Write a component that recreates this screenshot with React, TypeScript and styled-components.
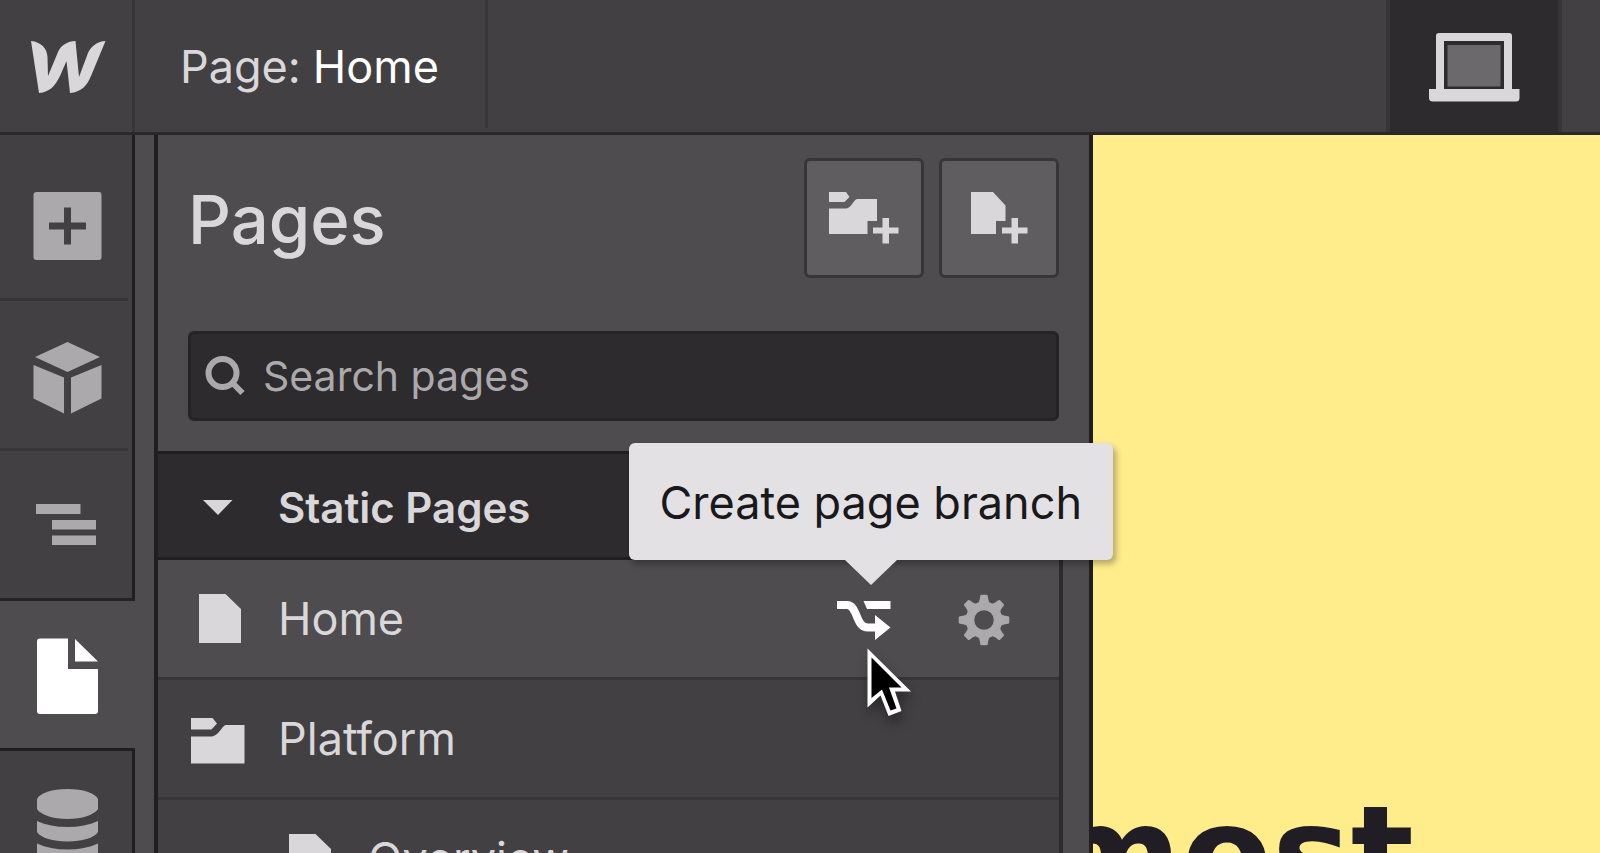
import React from "react";
import styled, { createGlobalStyle, css } from "styled-components";

const color = {
  bar: "#424042",
  panel: "#4e4c4e",
  raised: "#5f5d5f",
  sunken: "#2d2b2e",
  line: "#373538",
  edge: "#252326",
  dark: "#201e21",
  text: "#d9d7da",
  muted: "#aba9ab",
  white: "#ffffff",
  tip: "#e3e1e4",
  canvas: "#ffed8c",
  ink: "#201e24",
};

const GlobalStyle = createGlobalStyle`
  *, *::before, *::after { box-sizing: border-box; }
  body {
    margin: 0;
    background: ${color.panel};
    color: ${color.text};
    font-family: Inter, "Liberation Sans", sans-serif;
    font-optical-sizing: none;
    font-size: 45px;
    line-height: 60px;
  }
  button, input { font: inherit; color: inherit; margin: 0; padding: 0; border: 0; background: none; }
  button { display: flex; cursor: pointer; }
  svg { display: block; flex: none; }
`;

const Shell = styled.div`
  display: flex;
  flex-direction: column;
  height: 100vh;
  overflow: hidden;
`;

const TopBar = styled.header`
  display: flex;
  flex: none;
  height: 135px;
  background: ${color.bar};
  border-bottom: 3px solid #2a282b;
`;

const LogoLink = styled.a`
  display: flex;
  align-items: center;
  justify-content: center;
  width: 135px;
  padding: 2px 0 0 4px;
  border-right: 3px solid ${color.line};
`;

const PageButton = styled.button`
  align-items: center;
  gap: 12px;
  height: 128px;
  padding: 6px 46px 0 45px;
  border-right: 3px solid ${color.line};
  white-space: nowrap;
`;

const PageName = styled.span`
  color: ${color.white};
`;

const DeviceButton = styled.button`
  align-items: center;
  justify-content: center;
  width: 176px;
  margin: 0 38px 0 auto;
  padding-top: 2px;
  background: ${color.sunken};
  border: solid ${color.line};
  border-width: 0 4px;
`;

const Workspace = styled.div`
  display: flex;
  flex: 1;
  min-height: 0;
`;

const Sidebar = styled.nav`
  flex: none;
  width: 154px;
`;

const ToolGroup = styled.div<{ $after?: boolean }>`
  width: 135px;
  background: ${color.bar};
  border-right: 3px solid ${color.dark};
  ${(p) =>
    p.$after
      ? css`
          border-top: 3px solid ${color.dark};
        `
      : css`
          padding-top: 16px;
          border-bottom: 3px solid ${color.edge};
        `}
`;

const Rule = styled.div`
  height: 3px;
  margin-right: 4px;
  background: ${color.line};
`;

const ToolButton = styled.button<{ $active?: boolean }>`
  align-items: center;
  justify-content: center;
  width: 132px;
  height: 147px;
  padding-top: 3px;
  color: ${(p) => (p.$active ? color.white : color.muted)};
`;

const Panel = styled.section`
  display: flex;
  flex-direction: column;
  flex: none;
  width: 939px;
  z-index: 1;
  background: ${color.panel};
  border: solid ${color.dark};
  border-width: 0 4px;
`;

const PanelHeader = styled.div`
  display: flex;
  align-items: center;
  gap: 15px;
  padding: 23px 30px 0;
`;

const Title = styled.h1`
  flex: 1;
  margin: 0;
  padding-top: 3px;
  font-size: 67px;
  font-weight: 500;
  line-height: 84px;
`;

const CreateButton = styled.button`
  background: ${color.raised};
  border: 3px solid ${color.line};
  border-radius: 6px;
`;

const SearchBox = styled.label`
  display: flex;
  align-items: center;
  gap: 16px;
  height: 90px;
  flex: none;
  margin: 53px 30px 30px;
  padding: 0 14px;
  background: ${color.sunken};
  border: 3px solid ${color.edge};
  border-radius: 6px;
  color: ${color.muted};
`;

const SearchInput = styled.input`
  flex: 1;
  min-width: 0;
  height: 60px;
  outline: 0;
  font-size: 41px;
  &::placeholder { color: ${color.muted}; opacity: 1; }
`;

const PageList = styled.div`
  flex: 1;
  margin-right: 26px;
  background: ${color.bar};
  border-right: 4px solid ${color.sunken};
`;

const SectionButton = styled.button`
  align-items: center;
  gap: 30px;
  width: 100%;
  height: 109px;
  padding: 5px 30px 0;
  background: ${color.sunken};
  border: solid ${color.dark};
  border-width: 3px 0;
  font-size: 42px;
  font-weight: 600;
`;

const Rows = styled.ul`
  margin: 0;
  padding: 0;
  list-style: none;
`;

const Row = styled.li<{ $current?: boolean; $nested?: boolean }>`
  display: flex;
  align-items: center;
  gap: 60px;
  height: 120px;
  padding: 0 45px 0 ${(p) => (p.$nested ? 120 : 30)}px;
  background: ${(p) => (p.$current ? color.panel : color.bar)};
  border-bottom: 3px solid ${color.line};
`;

const RowLink = styled.a`
  display: flex;
  flex: 1;
  align-items: center;
  gap: 30px;
  color: ${color.text};
  text-decoration: none;
`;

const RowAction = styled.button<{ $hovered?: boolean }>`
  position: relative;
  color: ${(p) => (p.$hovered ? color.white : color.muted)};
`;

const Tooltip = styled.span`
  position: absolute;
  right: -219px;
  bottom: 89px;
  padding: 30px 31px 27px 30px;
  background: ${color.tip};
  border-radius: 6px;
  box-shadow: 3px 4px 6px rgba(0, 0, 0, 0.3);
  color: #19181b;
  white-space: nowrap;
  &::after {
    content: "";
    position: absolute;
    top: 100%;
    right: 216px;
    border: solid transparent;
    border-width: 25px 26px 0;
    border-top-color: ${color.tip};
  }
`;

const Pointer = styled.svg`
  position: absolute;
  top: 59px;
  left: 33px;
  overflow: visible;
  filter: drop-shadow(2px 8px 6px rgba(0, 0, 0, 0.35));
`;

const Canvas = styled.main`
  flex: 1;
  min-width: 0;
  overflow: hidden;
  padding-top: 653px;
  background: ${color.canvas};
`;

const CanvasHeading = styled.h2`
  margin: 0 0 0 -49px;
  color: ${color.ink};
  font-family: "DejaVu Sans", sans-serif;
  font-size: 132px;
  font-weight: 700;
  line-height: 132px;
`;

const Logo = () => (
  <svg width="76" height="54" viewBox="0 0 76 54" fill={color.text} aria-hidden="true">
    <path d="M1 1C11 2 17 8 17.500 17L18 36L28 12C31 5 38 1 45.500 1L49 37L58 13C61 6 68 1 75.500 1L61 36C57 46 51 52 40 53L36.500 21L30 36C25 46 20 52 9 53Z" />
  </svg>
);

const Laptop = () => (
  <svg width="92" height="70" viewBox="0 0 92 70" aria-hidden="true">
    <path
      fill={color.text}
      fillRule="evenodd"
      d="M8 57V4Q8 1 11 1H81Q84 1 84 4V57H91.500V66Q91.500 69.500 88 69.500H5Q1 69.500 1 66V57ZM16 9V57H76V9Z"
    />
    <path fill="#6b696b" d="M19.500 13H72.500V54.500H19.500Z" />
  </svg>
);

const ToolIcon = ({ children }: { children: React.ReactNode }) => (
  <svg width="76" height="80" viewBox="0 0 76 80" fill="currentColor" aria-hidden="true">
    {children}
  </svg>
);

const PageIcon = () => (
  <svg width="60" height="60" viewBox="0 0 60 60" fill={color.text} aria-hidden="true">
    <path d="M11 5H37.500L53 20V54H11Z" />
  </svg>
);

const FolderIcon = () => (
  <svg width="60" height="60" viewBox="0 0 60 60" fill={color.text} aria-hidden="true">
    <path d="M3 9H24.500L29 14.500L23.500 20.500H3Z" />
    <path d="M3 27.500H23.500C28 27 31 23 33 20.500Q36 16 38 16H56.500V54.500H3Z" />
  </svg>
);

const Gear = () => (
  <svg width="60" height="60" viewBox="0 0 60 60" aria-hidden="true">
    <circle cx="30" cy="31" r="14" fill="none" stroke="currentColor" strokeWidth="8.500" />
    {[0, 45, 90, 135, 180, 225, 270, 315].map((a) => (
      <path
        key={a}
        fill="currentColor"
        transform={`rotate(${a} 30 31)`}
        d="M23 15Q25.500 14 26.200 7Q26.400 5.700 27.500 5.700H32.500Q33.600 5.700 33.800 7Q34.500 14 37 15Z"
      />
    ))}
  </svg>
);

const Branch = () => (
  <svg width="60" height="60" viewBox="0 0 60 60" aria-hidden="true">
    <path d="M3 16H13C24 16 21 38.500 34 38.500H42" fill="none" stroke="currentColor" strokeWidth="8" />
    <path d="M41 26L56.500 38.500L41 51ZM29.500 12H56.500V20H33Z" fill="currentColor" />
  </svg>
);

export default function App() {
  return (
    <Shell>
      <GlobalStyle />
      <TopBar>
        <LogoLink href="#" aria-label="Dashboard">
          <Logo />
        </LogoLink>
        <PageButton type="button">
          <span>Page:</span>
          <PageName>Home</PageName>
        </PageButton>
        <DeviceButton type="button" aria-label="Desktop">
          <Laptop />
        </DeviceButton>
      </TopBar>
      <Workspace>
        <Sidebar>
          <ToolGroup>
            <ToolButton type="button" aria-label="Add elements">
              <ToolIcon>
                <path
                  fillRule="evenodd"
                  d="M8.500 6H71Q73.500 6 73.500 9V71Q73.500 74 71 74H8.500Q5.500 74 5.500 71V9Q5.500 6 8.500 6ZM36 21.500V36.500H21V43.500H36V58.500H43V43.500H58V36.500H43V21.500Z"
                />
              </ToolIcon>
            </ToolButton>
            <Rule />
            <ToolButton type="button" aria-label="Components">
              <ToolIcon>
                <path d="M39.500 6L72 21L39.500 36L7 21ZM5.500 29L36 41.500V77.500L5.500 62.500ZM43 41.500L73.500 29V62.500L43 77.500Z" />
              </ToolIcon>
            </ToolButton>
            <Rule />
            <ToolButton type="button" aria-label="Navigator">
              <ToolIcon>
                <path d="M8 18H52.500V28H8ZM24 34H68V43.500H24ZM24 49.500H68V59H24Z" />
              </ToolIcon>
            </ToolButton>
          </ToolGroup>
          <ToolButton type="button" aria-label="Pages" $active>
            <ToolIcon>
              <path d="M12 2.500H40V33H70V75Q70 78 67 78H12Q9 78 9 75V5.500Q9 2.500 12 2.500ZM47 3L70 25.500H47Z" />
            </ToolIcon>
          </ToolButton>
          <ToolGroup $after>
            <ToolButton type="button" aria-label="Collections">
              <ToolIcon>
                <path d="M9 13C12 7 24 3 39.500 3S67 7 70 13V23C66 29 54 33 39.500 33S13 29 9 23Z" />
                <path d="M9 35C18 39 28 41 39.500 41S61 39 70 35V46C66 52 54 55.500 39.500 55.500S13 52 9 46Z" />
                <path d="M9 57.500C18 61.500 28 63.500 39.500 63.500S61 61.500 70 57.500V68C66 74 54 77.500 39.500 77.500S13 74 9 68Z" />
              </ToolIcon>
            </ToolButton>
          </ToolGroup>
        </Sidebar>
        <Panel>
          <PanelHeader>
            <Title>Pages</Title>
            <CreateButton type="button" aria-label="Create folder">
              <svg width="114" height="114" viewBox="0 0 114 114" fill={color.text} aria-hidden="true">
                <path d="M22 31H39L42.500 36L37.500 41H22Z" />
                <path d="M22 47.500H39C43 47 45 43 47 40.500Q48.500 38 50 38H70V60H60.500V73H22Z" />
                <path d="M75.500 57H82V66.500H91.500V72.500H82V82.500H75.500V72.500H66V66.500H75.500Z" />
              </svg>
            </CreateButton>
            <CreateButton type="button" aria-label="Create page">
              <svg width="114" height="114" viewBox="0 0 114 114" fill={color.text} aria-hidden="true">
                <path d="M29 31H51L63.500 44.500V60H54V73H29Z" />
                <path d="M69.500 57H76V66.500H85.500V72.500H76V82.500H69.500V72.500H60V66.500H69.500Z" />
              </svg>
            </CreateButton>
          </PanelHeader>
          <SearchBox>
            <svg width="42" height="42" viewBox="0 0 42 42" fill="none" stroke="currentColor" strokeWidth="6" aria-hidden="true">
              <circle cx="17.500" cy="18" r="14" />
              <path d="M27 27.500L37.500 38" />
            </svg>
            <SearchInput type="text" placeholder="Search pages" aria-label="Search pages" />
          </SearchBox>
          <PageList>
            <SectionButton type="button" aria-expanded="true">
              <svg width="60" height="60" viewBox="0 0 60 60" fill={color.text} aria-hidden="true">
                <path d="M15 22H44.500L30 37Z" />
              </svg>
              Static Pages
            </SectionButton>
            <Rows>
              <Row $current>
                <RowLink href="#home">
                  <PageIcon />
                  Home
                </RowLink>
                <RowAction type="button" aria-label="Create page branch" $hovered>
                  <Branch />
                  <Tooltip role="tooltip">Create page branch</Tooltip>
                  <Pointer width="46" height="70" viewBox="0 0 46 70" aria-hidden="true">
                    <path fill="#fff" d="M0.500 0.500L44 43.500H28L34.500 63L21.500 68L13.500 47.500L0.500 59.500Z" />
                    <path fill="#000" d="M4.500 9.500L34.500 39.500H22L29.500 60.500L23.500 62.500L15 41.500L4.500 50Z" />
                  </Pointer>
                </RowAction>
                <RowAction type="button" aria-label="Page settings">
                  <Gear />
                </RowAction>
              </Row>
              <Row>
                <RowLink href="#platform">
                  <FolderIcon />
                  Platform
                </RowLink>
              </Row>
              <Row $nested>
                <RowLink href="#overview">
                  <PageIcon />
                  Overview
                </RowLink>
              </Row>
            </Rows>
          </PageList>
        </Panel>
        <Canvas>
          <CanvasHeading>most</CanvasHeading>
        </Canvas>
      </Workspace>
    </Shell>
  );
}
